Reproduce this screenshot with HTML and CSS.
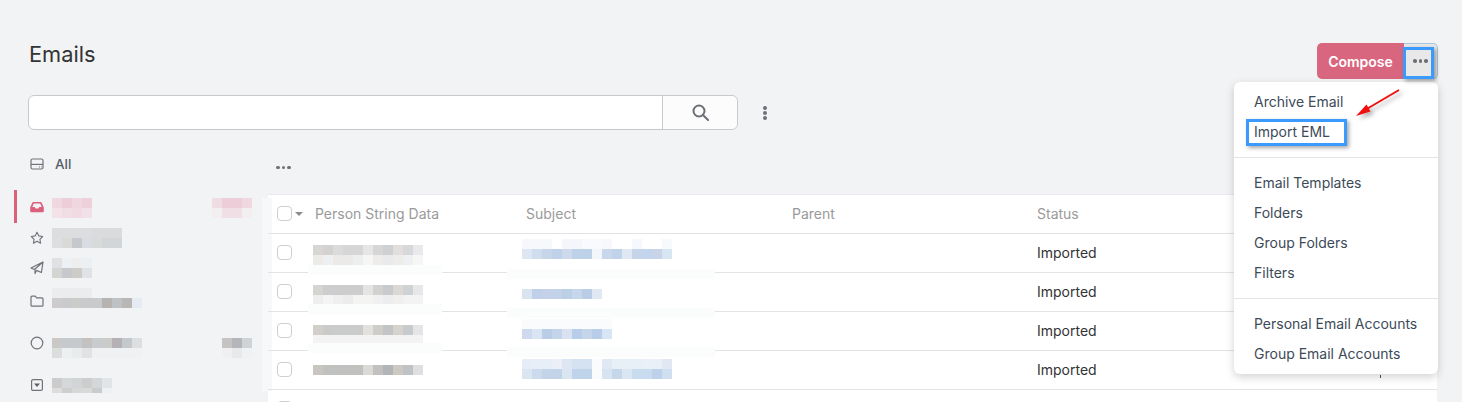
FILE: index.html
```html
<!DOCTYPE html>
<html lang="en">
<head>
<meta charset="utf-8">
<title>Emails</title>
<link rel="stylesheet" href="styles.css">
</head>
<body>
<div class="page">
  <header class="header">
    <h1 class="title">Emails</h1>
    <div class="actions">
      <button class="compose">Compose</button>
      <button class="more"><span class="dots"><i></i><i></i><i></i></span></button>
    </div>
  </header>
  <div class="search">
    <div class="search-group">
      <div class="search-input"></div>
      <div class="search-btn">
        <svg width="17" height="17" viewBox="0 0 17 17" fill="none" stroke="#6b6f76" stroke-width="2"><circle cx="7" cy="7" r="5.500"/><path d="M11 11 16 16" stroke-linecap="round"/></svg>
      </div>
    </div>
    <div class="kebab"><i></i><i></i><i></i></div>
  </div>
  <div class="main">
    <aside class="sidebar">
      <div class="all">
        <svg class="icon" width="14" height="14" viewBox="0 0 14 14" fill="none" stroke="#6f7378" stroke-width="1.200"><rect x="1" y="2" width="12" height="10" rx="1.500"/><path d="M1 7.400h12"/><path d="M9 9.800h.8M11 9.800h.6"/></svg>
        <span>All</span>
      </div>
      <div class="folders">
        <div class="folder active">
          <svg class="icon" width="14" height="14" viewBox="0 0 14 14"><path fill="#dc5f7b" fill-rule="evenodd" d="M3.400 2h7.200c.5 0 .9.3 1.100.7L13.600 7c.1.2.2.4.2.6V11c0 .8-.6 1.300-1.300 1.300h-11C.8 12.300.2 11.800.2 11V7.600c0-.2.1-.4.2-.6l1.900-4.300c.2-.4.6-.7 1.100-.7Zm.4 1.500L2.300 7h2.400l.8 1.500h3l.8-1.500h2.400l-1.500-3.500Z"/></svg>
          <span class="mos m-inbox"></span><span class="mos m-inbox-count"></span>
        </div>
        <div class="folder">
          <svg class="icon" width="14" height="14" viewBox="0 0 14 14" fill="none" stroke="#6f7378" stroke-width="1.100" stroke-linejoin="round"><path d="m7 1.300 1.800 3.600 3.900.6-2.800 2.800.7 3.900L7 10.300l-3.600 1.900.7-3.900-2.800-2.800 3.900-.6Z"/></svg>
          <span class="mos m-star"></span>
        </div>
        <div class="folder">
          <svg class="icon" width="14" height="14" viewBox="0 0 14 14" fill="none" stroke="#6f7378" stroke-width="1.200" stroke-linejoin="round"><path d="M13 1 1 7l3.400 1.500L13 1l-1.600 10.500-4.900-2.100L5 12.500V8.800"/></svg>
          <span class="mos m-sent"></span>
        </div>
        <div class="folder tall">
          <svg class="icon" width="14" height="14" viewBox="0 0 14 14" fill="none" stroke="#6f7378" stroke-width="1.200" stroke-linejoin="round"><path d="M1 3.200c0-.6.4-1 1-1h3.200l1.500 1.700H12c.6 0 1 .4 1 1v6.300c0 .6-.4 1-1 1H2c-.6 0-1-.4-1-1Z"/></svg>
          <span class="mos m-folder"></span>
        </div>
        <div class="folder group">
          <svg class="icon" width="14" height="14" viewBox="0 0 14 14" fill="none" stroke="#6f7378" stroke-width="1.200"><circle cx="7" cy="7" r="5.800"/></svg>
          <span class="mos m-group"></span><span class="mos m-group-count"></span>
        </div>
        <div class="folder last">
          <svg class="icon" width="14" height="14" viewBox="0 0 14 14"><rect x="1.600" y="1.600" width="10.800" height="10.800" rx="1.500" fill="none" stroke="#6f7378" stroke-width="1.200"/><path fill="#5c6066" d="M4 5.400h6L7 9Z"/></svg>
          <span class="mos m-last"></span>
        </div>
      </div>
    </aside>
    <section class="content">
      <div class="content-top"><span class="dots"><i></i><i></i><i></i></span></div>
      <div class="table">
        <div class="row head">
          <div class="check-cell"><span class="check"></span><span class="caret"></span></div>
          <div>Person String Data</div><div>Subject</div><div>Parent</div><div>Status</div>
        </div>
        <div class="row">
          <div class="check-cell"><span class="check"></span></div>
          <div><span class="mos name n1"></span></div><div><span class="mos subj s1"></span></div><div></div><div>Imported</div>
        </div>
        <div class="row">
          <div class="check-cell"><span class="check"></span></div>
          <div><span class="mos name n2"></span></div><div><span class="mos subj s2"></span></div><div></div><div>Imported</div>
        </div>
        <div class="row">
          <div class="check-cell"><span class="check"></span></div>
          <div><span class="mos name n3"></span></div><div><span class="mos subj s3"></span></div><div></div><div>Imported</div>
        </div>
        <div class="row">
          <div class="check-cell"><span class="check"></span></div>
          <div><span class="mos name n4"></span></div><div><span class="mos subj s4"></span></div><div></div><div>Imported</div>
          <span class="stem"></span>
        </div>
        <div class="row">
          <div class="check-cell"><span class="check"></span></div>
        </div>
      </div>
    </section>
  </div>
  <nav class="menu">
    <a>Archive Email</a>
    <a>Import EML</a>
    <hr>
    <a>Email Templates</a>
    <a>Folders</a>
    <a>Group Folders</a>
    <a>Filters</a>
    <hr>
    <a>Personal Email Accounts</a>
    <a>Group Email Accounts</a>
  </nav>
  <div class="mark mark-more"></div>
  <div class="mark mark-import"></div>
  <svg class="arrow" width="50" height="32" viewBox="0 0 50 32"><path d="M48 1 14 21" stroke="#f01010" stroke-width="2" fill="none"/><path fill="#f01010" d="M5 27 15.500 15.500 19.500 22.500Z"/></svg>
</div>
</body>
</html>
```
FILE: styles.css
```css
* { box-sizing: border-box; }
html, body { margin: 0; height: 402px; overflow: hidden; }
body { background: #f2f3f5; font-family: Inter, "Liberation Sans", sans-serif; font-size: 14px; color: #333; }
.page { position: relative; height: 402px; overflow: hidden; padding-top: 43px; }

.header { display: flex; justify-content: space-between; align-items: flex-start; padding: 0 24px 0 29px; height: 52px; }
.title { margin: 0; font-size: 21.800px; font-weight: 400; line-height: 22px; color: #333; }
.actions { display: flex; height: 36px; }
.compose { width: 87px; border: 0; border-radius: 5px 0 0 5px; background: #d9667f; color: #fff; font: 600 14px Inter, sans-serif; }
.more { width: 34px; padding: 0; border: 1px solid #a9c4de; border-left: 0; border-radius: 0 5px 5px 0; background: #e8e8e8; display: flex; align-items: center; justify-content: center; }
.dots { display: inline-flex; gap: 2px; }
.dots i { width: 3.500px; height: 3.500px; border-radius: 50%; background: #6d7176; }

.search { display: flex; align-items: center; padding-left: 28px; height: 35px; }
.search-group { display: flex; width: 710px; height: 35px; background: #fff; border: 1px solid #c6cacd; border-radius: 6px; }
.search-input { width: 633px; }
.search-btn { flex: 1; border-left: 1px solid #c6cacd; display: flex; align-items: center; justify-content: center; background: #fcfcfc; border-radius: 0 6px 6px 0; }
.kebab { margin-left: 25px; display: flex; flex-direction: column; gap: 1px; }
.kebab i { width: 4px; height: 4px; border-radius: 50%; background: #6d7176; }

.main { display: flex; padding-left: 14px; }
.sidebar { width: 254px; padding-top: 25px; flex: none; position: relative; }
.sidebar::after { content: ""; position: absolute; left: 248px; top: 68px; width: 10px; height: 193px; background: #f7f8fa; }
.all { display: flex; align-items: center; gap: 11px; height: 18px; padding-left: 16px; font-weight: 500; color: #555f6a; font-size: 13.500px; }
.icon { flex: none; }
.folders { margin-top: 17px; }
.folder { position: relative; display: flex; align-items: center; height: 30px; padding-left: 16px; }
.folder.active { height: 33px; border-left: 3px solid #dc5f7b; padding-left: 13px; }
.folder.tall { height: 36px; }
.folder.group { margin-top: 9px; }
.folder.last { margin-top: 12px; }

.mos { display: block; background-repeat: no-repeat; }
.folder .mos { position: absolute; left: 38px; }
.folder .m-inbox { left: 35px; }
.folder .m-inbox-count { left: 195px; }
.folder .m-group-count { left: 208px; }
.m-inbox { width: 40px; height: 20px; top: 8px; background-image:
  linear-gradient(90deg, #f0d8e0 0 10px, #edcdd8 0 20px, #f0d6df 0 30px, #eed0da 0 40px),
  linear-gradient(90deg, #f3e3e9 0 10px, #f1dee5 0 20px, #f0dbe3 0 30px, #f1e0e7 0 40px);
  background-size: 100% 10px; background-position: top, bottom; }
.m-inbox-count { width: 40px; height: 20px; top: 8px; background-image:
  linear-gradient(90deg, #f0dce3 0 10px, #edcdd8 0 30px, #f0d8e0 0 40px),
  linear-gradient(90deg, #f3eef0 0 10px, #f1dfe6 0 30px, #f3eff1 0 40px);
  background-size: 100% 10px; background-position: top, bottom; }
.m-star { width: 70px; height: 20px; top: 5px; background-image:
  linear-gradient(90deg, #dcdddf 0 40px, #d9dbdd 0 70px),
  linear-gradient(90deg, #dddedf 0 10px, #d9dad8 0 20px, #c6c8cd 0 30px, #d9dce0 0 40px, #d9dbda 0 50px, #d3d6d9 0 70px);
  background-size: 100% 10px; background-position: top, bottom; }
.m-sent { width: 40px; height: 20px; top: 5px; background-image:
  linear-gradient(90deg, #e0e1e2 0 10px, #edf1f4 0 20px, #eeeeee 0 30px, #ecf0f3 0 40px),
  linear-gradient(90deg, #d4d4d3 0 10px, #c6c8cc 0 20px, #cdccc9 0 30px, #dfe2e6 0 40px);
  background-size: 100% 10px; background-position: top, bottom; }
.m-folder { width: 90px; height: 20px; top: 5px; background-image:
  linear-gradient(90deg, #ebecee 0 40px, transparent 0),
  linear-gradient(90deg, #cdcbcc 0 10px, #c8cacc 0 20px, #cbcbc9 0 30px, #c9cacc 0 50px, #b6b3b1 0 60px, #bfc2c5 0 70px, #b8b7b6 0 80px, #e6ebf3 0 90px);
  background-size: 100% 10px; background-position: top, bottom; }
.m-group { width: 90px; height: 20px; top: 10px; background-image:
  linear-gradient(90deg, #cbc9c8 0 10px, #c7cacd 0 30px, #c4c2c0 0 40px, #c8cccf 0 50px, #cbcbca 0 60px, #b6b1b5 0 70px, #c4c9ce 0 80px, #dcdee0 0 90px),
  linear-gradient(90deg, #dcdddd 0 10px, #edf0f1 0 20px, #e9ebec 0 30px, #e1e2e3 0 40px, #eff1f2 0 90px);
  background-size: 100% 10px; background-position: top, bottom; }
.m-group-count { width: 30px; height: 20px; top: 10px; background-image:
  linear-gradient(90deg, #c6c4c2 0 10px, #b4b6b9 0 20px, #d0d3d6 0 30px),
  linear-gradient(90deg, #f0f0f2 0 10px, #e8e9eb 0 20px, #eff1f3 0 30px);
  background-size: 100% 10px; background-position: top, bottom; }
.m-last { width: 60px; height: 15px; top: 8px; background-image:
  linear-gradient(90deg, #cccccc 0 10px, #d5d7d8 0 20px, #d1d5d6 0 30px, #cccdcd 0 40px, #d4d6d7 0 50px, #e2e5e8 0 60px),
  linear-gradient(90deg, #dddddd 0 10px, #cdcfcf 0 20px, #d6d8d8 0 30px, #d8d9d9 0 40px, #c9cbcc 0 50px, #eef0f2 0 60px);
  background-size: 100% 10px, 100% 5px; background-position: top, bottom; }

.content { flex: 1; padding-right: 25px; min-width: 0; }
.content-top { display: flex; align-items: center; height: 64px; padding: 11px 0 0 8px; }
.table { background: #fff; border-top: 1px solid #e8eaed; }
.row { position: relative; display: grid; grid-template-columns: 47px 211px 266px 245px 1fr; height: 39px; padding-bottom: 1px; align-items: center; border-bottom: 1px solid #e2e3e5; color: #333; }
.row.head { color: #9a9a9a; }
.stem { position: absolute; left: 1112px; top: 24px; width: 1px; height: 3px; background: #555; }
.check-cell { display: flex; align-items: center; padding-left: 9px; gap: 3px; }
.check { display: block; width: 15px; height: 15px; border: 1px solid #cfcfcf; border-radius: 4px; background: #fff; }
.caret { border: 4px solid transparent; border-top: 4px solid #8b8b8b; border-bottom: 0; }

.name { width: 110px; height: 20px; margin-left: -2px; background-size: 100% 10px; background-position: top, bottom; }
.subj { width: 150px; height: 20px; margin-left: -4px; background-size: 100% 10px; background-position: top, bottom; }
.n1 { margin-top: 5px; background-image:
  linear-gradient(90deg, #d8d6d4 0 10px, #d3d2d0 0 20px, #dadcdb 0 30px, #d6d6d7 0 50px, #e6e6e6 0 60px, #d6d6d6 0 70px, #cfd0d2 0 80px, #e1dedb 0 90px, #d7d8da 0 100px, #e8e9eb 0 110px),
  linear-gradient(90deg, #ecebe9 0 10px, #eeeff0 0 20px, #ebeae8 0 40px, #edeeee 0 50px, #f5f5f3 0 60px, #eeecea 0 70px, #e9eaec 0 80px, #eeecea 0 90px, #eff0f1 0 100px, #f6f6f6 0 110px); }
.n2 { margin-top: 7px; background-image:
  linear-gradient(90deg, #d5d4d1 0 10px, #cdcdcd 0 50px, #e4e4e4 0 60px, #d2d2d0 0 70px, #c8cacd 0 80px, #dcd9d4 0 90px, #cfd2d4 0 100px, #e6e7e9 0 110px),
  linear-gradient(90deg, #eeeeee 0 10px, #f3f4f3 0 20px, #efefef 0 30px, #ececec 0 40px, #f4f4f3 0 60px, #f0f0f0 0 70px, #ecedef 0 80px, #f0efee 0 90px, #f3f3f4 0 110px); }
.n3 { margin-top: 9px; background-image:
  linear-gradient(90deg, #d2cfca 0 10px, #c8cbc9 0 20px, #cacbcb 0 50px, #e3e1de 0 60px, #cfcdca 0 70px, #c2c4c5 0 80px, #d6d3cc 0 90px, #c8cbcd 0 100px, #e4e5e7 0 110px),
  linear-gradient(90deg, #f3f3f3 0 110px); }
.n4 { height: 10px; background-image:
  linear-gradient(90deg, #c9c5c1 0 10px, #c1c2c0 0 50px, #dbd9d6 0 60px, #c3c1bf 0 70px, #b2b5b7 0 80px, #cdc8c1 0 90px, #bfc3c5 0 100px, #dedfe0 0 110px); background-size: 100% 10px; background-position: top; }
.s1 { margin-bottom: 7px; background-image:
  linear-gradient(90deg, #f6f8fc 0 30px, #ffffff 0 40px, #f4f6fb 0 60px, #f9fafd 0 80px, #f6f8fc 0 90px, #ffffff 0 110px, #f7f8fd 0 120px, #ffffff 0 140px, #f6fafd 0 150px),
  linear-gradient(90deg, #dde6f2 0 10px, #d0ddee 0 20px, #c7d5e9 0 30px, #bfd2e9 0 40px, #cfd9ec 0 50px, #bdd2e9 0 70px, #f2f6fb 0 80px, #c9d7ea 0 90px, #c0d3ea 0 100px, #e0e9f3 0 110px, #c6d4ea 0 120px, #c2d5ec 0 130px, #c9d4e8 0 140px, #d8e5f3 0 150px); }
.s2 { width: 80px; height: 10px; margin-top: 5px; background-image:
  linear-gradient(90deg, #dae3f0 0 10px, #bfd0e8 0 20px, #c5d1e8 0 30px, #c2d2e9 0 40px, #bbcfe7 0 50px, #c7d7eb 0 60px, #b9cde7 0 70px, #dfe8f3 0 80px); background-size: 100% 10px; background-position: top; }
.s3 { width: 90px; margin-bottom: 3px; background-image:
  linear-gradient(90deg, #fafbfd 0 90px),
  linear-gradient(90deg, #cfd9ee 0 10px, #dae5f3 0 20px, #b9cde7 0 30px, #c4d5ea 0 40px, #d8e2f0 0 50px, #b7cde9 0 60px, #c5d5ea 0 70px, #bacde8 0 80px, #d8e5f4 0 90px); }
.s4 { margin-bottom: 1px; background-image:
  linear-gradient(90deg, #e6edf6 0 10px, #e8eef8 0 30px, #eaeff8 0 40px, #dde6f2 0 50px, #d5e2f2 0 70px, #fafbfd 0 80px, #dfe8f3 0 90px, #e8f0f7 0 120px, #eaf0f8 0 140px, #e0e8f3 0 150px),
  linear-gradient(90deg, #dbe5f2 0 10px, #ccdaed 0 20px, #c3d4e9 0 40px, #d9e5f1 0 50px, #bfd4ea 0 70px, #fafbfd 0 80px, #d7e3f0 0 90px, #c6d7ea 0 100px, #dae6f2 0 110px, #c9dbee 0 130px, #bdd2ea 0 140px, #d0dff0 0 150px); }
.row::before, .row::after { content: ""; position: absolute; height: 10px; background: #fbfcfc; }
.row::before { left: 40px; width: 134px; bottom: -3px; }
.row::after { left: 239px; width: 208px; bottom: -7px; }
.row.head::before, .row.head::after, .row:nth-child(5)::before, .row:nth-child(5)::after, .row:last-child::before, .row:last-child::after { display: none; }

.menu { position: absolute; left: 1234px; top: 82px; width: 204px; height: 292px; padding: 5px 0; background: #fff; border-radius: 6px; box-shadow: 0 3px 10px rgba(0,0,0,.18); color: #3d4a58; }
.menu a { display: block; height: 30px; line-height: 30px; padding-left: 20px; }
.menu hr { margin: 10px 0; height: 1px; border: 0; background: #e4e5e7; }

.mark { position: absolute; border: 3px solid #3b9bfd; box-shadow: 2px 2px 4px rgba(0,0,0,.35); }
.mark-more { left: 1403px; top: 47px; width: 31px; height: 32px; }
.mark-import { left: 1246px; top: 119px; width: 101px; height: 27px; }
.arrow { position: absolute; left: 1351px; top: 89px; filter: drop-shadow(3px 3px 2px rgba(0,0,0,.3)); }
```
